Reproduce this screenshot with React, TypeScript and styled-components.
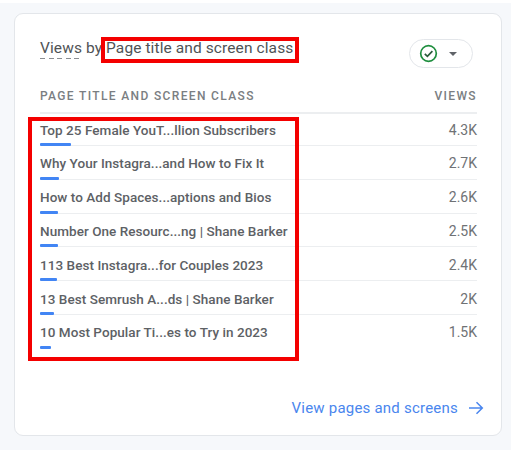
import React from "react";
import styled, { createGlobalStyle } from "styled-components";

const GlobalStyle = createGlobalStyle`
  html, body {
    margin: 0;
    padding: 0;
    background: #ffffff;
  }
`;

const Page = styled.div`
  position: relative;
  box-sizing: border-box;
  width: 511px;
  height: 450px;
  padding: 10px 9px 14px 14px;
  background: #f6f8fb;
  font-family: Roboto, "Liberation Sans", sans-serif;
  border-top: 3px solid #ffffff;
`;

const Card = styled.section`
  box-sizing: border-box;
  height: 423px;
  padding: 22px 24px 0 25px;
  background: #ffffff;
  border: 1px solid #e3e6ea;
  border-radius: 9px;
  display: flex;
  flex-direction: column;
`;

const CardHeader = styled.header`
  display: flex;
  align-items: flex-start;
  justify-content: space-between;
  height: 32px;
`;

const Title = styled.h2`
  margin: 3px 0 0;
  font-size: 15.5px;
  font-weight: 400;
  color: #4f5356;
  letter-spacing: 0.1px;
  white-space: nowrap;
`;

const Dashed = styled.span`
  padding-bottom: 2px;
  background-image: repeating-linear-gradient(90deg, #8a8d91 0 5px, transparent 5px 8.5px);
  background-size: 100% 1px;
  background-position: left bottom;
  background-repeat: no-repeat;
`;

const StatusPill = styled.button`
  display: flex;
  align-items: center;
  gap: 11px;
  width: 64px;
  height: 29px;
  box-sizing: border-box;
  margin: 3px 4px 0 0;
  padding: 0 0 0 9px;
  background: #ffffff;
  border: 1px solid #e3e6ea;
  border-radius: 15px;
`;

const Caret = styled.span`
  width: 0;
  height: 0;
  border-left: 4.5px solid transparent;
  border-right: 4.5px solid transparent;
  border-top: 4.5px solid #5f6368;
`;

const ColumnHeads = styled.div`
  display: flex;
  justify-content: space-between;
  align-items: flex-start;
  box-sizing: border-box;
  height: 33px;
  margin-top: 13px;
  padding-top: 8px;
  font-size: 12px;
  font-weight: 500;
  letter-spacing: 1.35px;
  color: #7a7e82;
  border-bottom: 2px solid #eceef0;
`;

const Rows = styled.ul`
  margin: 0;
  padding: 0;
  list-style: none;
`;

const Row = styled.li`
  position: relative;
  box-sizing: border-box;
  height: 33.8px;
  display: flex;
  justify-content: space-between;
  align-items: center;
  padding-top: 2px;
  border-bottom: 1px solid #eceef0;

  &:first-child {
    height: 32px;
    padding-top: 1px;
  }

  &:last-child {
    border-bottom-color: transparent;
  }
`;

const RowTitle = styled.span`
  font-size: 13.5px;
  font-weight: 500;
  letter-spacing: 0.05px;
  color: #5d6165;
  white-space: nowrap;
`;

const RowValue = styled.span`
  font-size: 14px;
  color: #6f7275;
`;

const Bar = styled.span`
  position: absolute;
  left: 0;
  bottom: -1px;
  height: 3px;
  border-radius: 1px;
  background: #4285f4;
`;

const Footer = styled.a`
  display: flex;
  align-items: center;
  justify-content: flex-end;
  gap: 10px;
  margin: 50px -7px 0 0;
  font-size: 15px;
  letter-spacing: 0.22px;
  color: #4a86ee;
`;

const Highlight = styled.div<{ $x: number; $y: number; $w: number; $h: number }>`
  position: absolute;
  box-sizing: border-box;
  left: ${(p) => p.$x}px;
  top: ${(p) => p.$y}px;
  width: ${(p) => p.$w}px;
  height: ${(p) => p.$h}px;
  border: 4px solid #f40000;
`;

const rows = [
  { title: "Top 25 Female YouT...llion Subscribers", value: "4.3K", bar: 31 },
  { title: "Why Your Instagra...and How to Fix It", value: "2.7K", bar: 19 },
  { title: "How to Add Spaces...aptions and Bios", value: "2.6K", bar: 18 },
  { title: "Number One Resourc...ng | Shane Barker", value: "2.5K", bar: 18 },
  { title: "113 Best Instagra...for Couples 2023", value: "2.4K", bar: 17 },
  { title: "13 Best Semrush A...ds | Shane Barker", value: "2K", bar: 14 },
  { title: "10 Most Popular Ti...es to Try in 2023", value: "1.5K", bar: 11 },
];

export default function App() {
  return (
    <Page>
      <GlobalStyle />
      <Card>
        <CardHeader>
          <Title>
            <Dashed>Views</Dashed> by Page title and screen class
          </Title>
          <StatusPill>
            <svg width="19" height="19" viewBox="0 0 19 19" fill="none">
              <circle cx="9.5" cy="9.5" r="7.8" stroke="#1e8e3e" strokeWidth="1.7" />
              <path d="M5.8 9.8l2.6 2.6 5-5.2" stroke="#2b5c3c" strokeWidth="1.7" />
            </svg>
            <Caret />
          </StatusPill>
        </CardHeader>
        <ColumnHeads>
          <span>PAGE TITLE AND SCREEN CLASS</span>
          <span>VIEWS</span>
        </ColumnHeads>
        <Rows>
          {rows.map((row) => (
            <Row key={row.title}>
              <RowTitle>{row.title}</RowTitle>
              <RowValue>{row.value}</RowValue>
              <Bar style={{ width: row.bar }} />
            </Row>
          ))}
        </Rows>
        <Footer>
          View pages and screens
          <svg width="16" height="14" viewBox="0 0 16 14" fill="none">
            <path d="M1 7h13M8.5 1.2L14.3 7l-5.8 5.8" stroke="#4a86ee" strokeWidth="1.5" />
          </svg>
        </Footer>
      </Card>
      <Highlight $x={101} $y={34} $w={198} $h={26} />
      <Highlight $x={28} $y={114} $w={271} $h={244} />
    </Page>
  );
}
